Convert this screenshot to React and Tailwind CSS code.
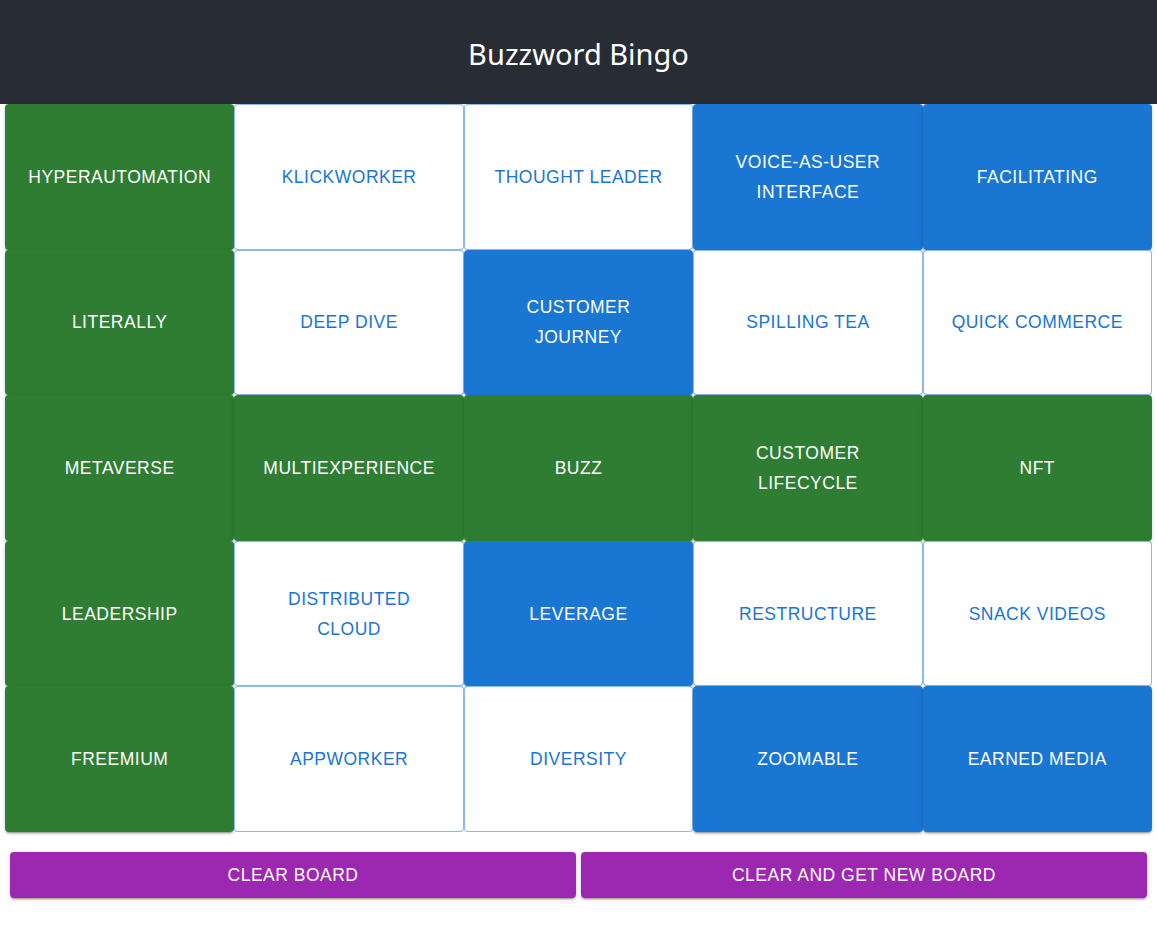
import React from "react";

const G = "g", W = "w", B = "b";
const rows = [
  [[G, ["HYPERAUTOMATION"]], [W, ["KLICKWORKER"]], [W, ["THOUGHT LEADER"]], [B, ["VOICE-AS-USER", "INTERFACE"]], [B, ["FACILITATING"]]],
  [[G, ["LITERALLY"]], [W, ["DEEP DIVE"]], [B, ["CUSTOMER", "JOURNEY"]], [W, ["SPILLING TEA"]], [W, ["QUICK COMMERCE"]]],
  [[G, ["METAVERSE"]], [G, ["MULTIEXPERIENCE"]], [G, ["BUZZ"]], [G, ["CUSTOMER", "LIFECYCLE"]], [G, ["NFT"]]],
  [[G, ["LEADERSHIP"]], [W, ["DISTRIBUTED", "CLOUD"]], [B, ["LEVERAGE"]], [W, ["RESTRUCTURE"]], [W, ["SNACK VIDEOS"]]],
  [[G, ["FREEMIUM"]], [W, ["APPWORKER"]], [W, ["DIVERSITY"]], [B, ["ZOOMABLE"]], [B, ["EARNED MEDIA"]]],
];

const shadow = "shadow-[0px_3px_1px_-2px_rgba(0,0,0,0.2),0px_2px_2px_0px_rgba(0,0,0,0.14),0px_1px_5px_0px_rgba(0,0,0,0.12)]";

function Cell({ kind, lines }) {
  let cls = "";
  if (kind === G) cls = `bg-[#2e7d32] text-white ${shadow}`;
  else if (kind === B) cls = `bg-[#1976d2] text-white ${shadow}`;
  else cls = "bg-white text-[#1976d2] border border-[rgba(25,118,210,0.5)]";
  return (
    <div className={`h-full w-full rounded-[4px] flex flex-col items-center justify-center px-[22px] text-[17.5px] leading-[30px] tracking-[0.02857em] font-medium ${cls}`}>
      {lines.map((l, i) => (
        <span key={i} className="whitespace-nowrap">{l}</span>
      ))}
    </div>
  );
}

export default function App() {
  return (
    <div className="min-h-[936px] bg-white font-['Liberation_Sans',Arial,sans-serif]">
      <header className="h-[104px] bg-[#282c34] flex items-center justify-center">
        <h1 className="text-white text-[29px] font-['Noto_Sans',sans-serif] font-normal pt-[4px]">Buzzword Bingo</h1>
      </header>
      <div className="px-[5px] grid grid-cols-5 grid-rows-[repeat(5,145.6px)]">
        {rows.flat().map(([kind, lines], i) => (
          <Cell key={i} kind={kind} lines={lines} />
        ))}
      </div>
      <div className="flex gap-[5px] px-[10px] mt-[20px]">
        <button className={`flex-1 h-[46px] rounded-[4px] bg-[#9c27b0] text-white text-[17.5px] tracking-[0.02857em] ${shadow}`}>CLEAR BOARD</button>
        <button className={`flex-1 h-[46px] rounded-[4px] bg-[#9c27b0] text-white text-[17.5px] tracking-[0.02857em] ${shadow}`}>CLEAR AND GET NEW BOARD</button>
      </div>
    </div>
  );
}
